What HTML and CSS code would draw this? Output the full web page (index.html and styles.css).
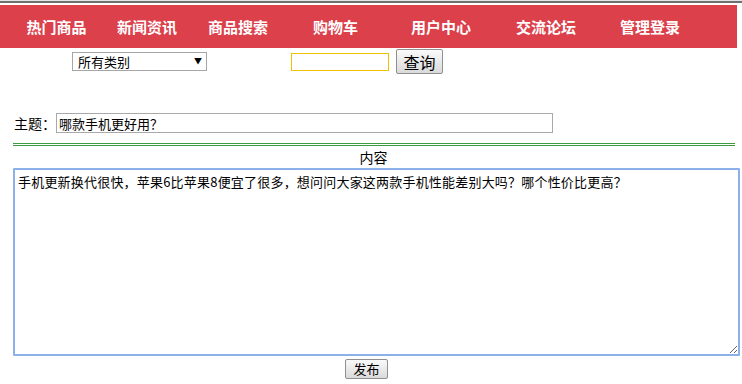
FILE: index.html
```html
<!DOCTYPE html>
<html lang="zh-CN">
  <head>
    <meta charset="UTF-8" />
    <title>发布帖子</title>
    <link rel="stylesheet" href="styles.css">
  </head>
  <body>
    <div class="topline"></div>

    <ul class="nav">
      <li>热门商品</li>
      <li>新闻资讯</li>
      <li>商品搜索</li>
      <li>购物车</li>
      <li>用户中心</li>
      <li>交流论坛</li>
      <li>管理登录</li>
    </ul>

    <form class="search">
      <span class="select-wrap">
        <select name="category">
          <option>所有类别</option>
          <option>手机</option>
          <option>电脑</option>
        </select>
      </span>
      <input type="text" name="keyword" class="keyword" />
      <button type="button" class="btn btn-big">查询</button>
    </form>

    <form class="post">
      <label class="subject">
        主题：
        <input type="text" name="title" value="哪款手机更好用？" />
      </label>

      <div class="rule"></div>

      <div class="content-title">内容</div>
      <textarea name="content">手机更新换代很快，苹果6比苹果8便宜了很多，想问问大家这两款手机性能差别大吗？哪个性价比更高？</textarea>

      <div class="submit-row">
        <button type="submit" class="btn">发布</button>
      </div>
    </form>
  </body>
</html>
```

FILE: styles.css
```css
body {
  margin: 0;
  font-family: "Noto Sans CJK SC", "DejaVu Sans", sans-serif;
  color: #000;
  background: #fff;
  width: 742px;
}

.topline {
  height: 2px;
  margin-bottom: 2px;
  background: #6f6f6f;
  border-top: 1px solid #e4e4e4;
}

.nav {
  list-style: none;
  margin: 0;
  padding: 0 0 0 11px;
  width: 726px;
  height: 43px;
  background: #db404b;
  display: grid;
  grid-template-columns: 91px 90px 92px 103px 108px 102px 106px;
  align-items: center;
}

.nav li {
  text-align: center;
  color: #fff;
  font-weight: bold;
  font-size: 15px;
  line-height: 20px;
}

.search {
  display: flex;
  align-items: center;
  height: 27px;
  padding-left: 72px;
}

.select-wrap {
  position: relative;
  display: inline-block;
}

.select-wrap::after {
  content: "▼";
  position: absolute;
  right: 5px;
  top: 4px;
  font-size: 8px;
  line-height: 10px;
  pointer-events: none;
}

select {
  appearance: none;
  -webkit-appearance: none;
  width: 135px;
  height: 19px;
  padding: 0 0 0 5px;
  border: 1px solid #a6a6a6;
  border-radius: 0;
  background: #fff;
  font-family: inherit;
  font-size: 13px;
  line-height: 17px;
  display: block;
}

.keyword {
  width: 98px;
  height: 18px;
  box-sizing: border-box;
  margin: 0 0 0 84px;
  padding: 0 3px;
  border: 1px solid #f2c200;
  outline: none;
}

.btn {
  font-family: inherit;
  font-size: 13px;
  line-height: 16px;
  height: 20px;
  padding: 0 7px;
  border: 1px solid #8f8f8f;
  border-radius: 2px;
  background: linear-gradient(#fafafa, #dadada);
  color: #000;
  cursor: pointer;
}

.btn-big {
  height: 25px;
  width: 47px;
  margin-left: 7px;
  padding: 0;
  font-size: 16px;
  line-height: 20px;
}

.post {
  margin: 38px 0 0 13px;
  width: 727px;
}

.subject {
  display: flex;
  align-items: center;
  font-size: 14px;
  padding-left: 1px;
}

.subject input {
  width: 497px;
  height: 20px;
  box-sizing: border-box;
  padding: 0 2px;
  border: 1px solid #a9a9a9;
  font-family: inherit;
  font-size: 13px;
}

.rule {
  margin-top: 10px;
  width: 722px;
  height: 1px;
  border-top: 1px solid #3f9b3f;
  border-bottom: 1px solid #3f9b3f;
}

.content-title {
  text-align: center;
  font-size: 14px;
  line-height: 20px;
  margin-top: 1px;
  padding-right: 6px;
}

textarea {
  display: block;
  width: 727px;
  height: 188px;
  box-sizing: border-box;
  margin: 1px 0 0 0;
  padding: 3px 3px;
  border: 2px solid #8cb0ea;
  border-radius: 1px;
  outline: none;
  font-family: inherit;
  font-size: 13px;
  letter-spacing: 0.2px;
  line-height: 18px;
}

.submit-row {
  display: flex;
  justify-content: center;
  margin-top: 3px;
  padding-right: 20px;
}
```
